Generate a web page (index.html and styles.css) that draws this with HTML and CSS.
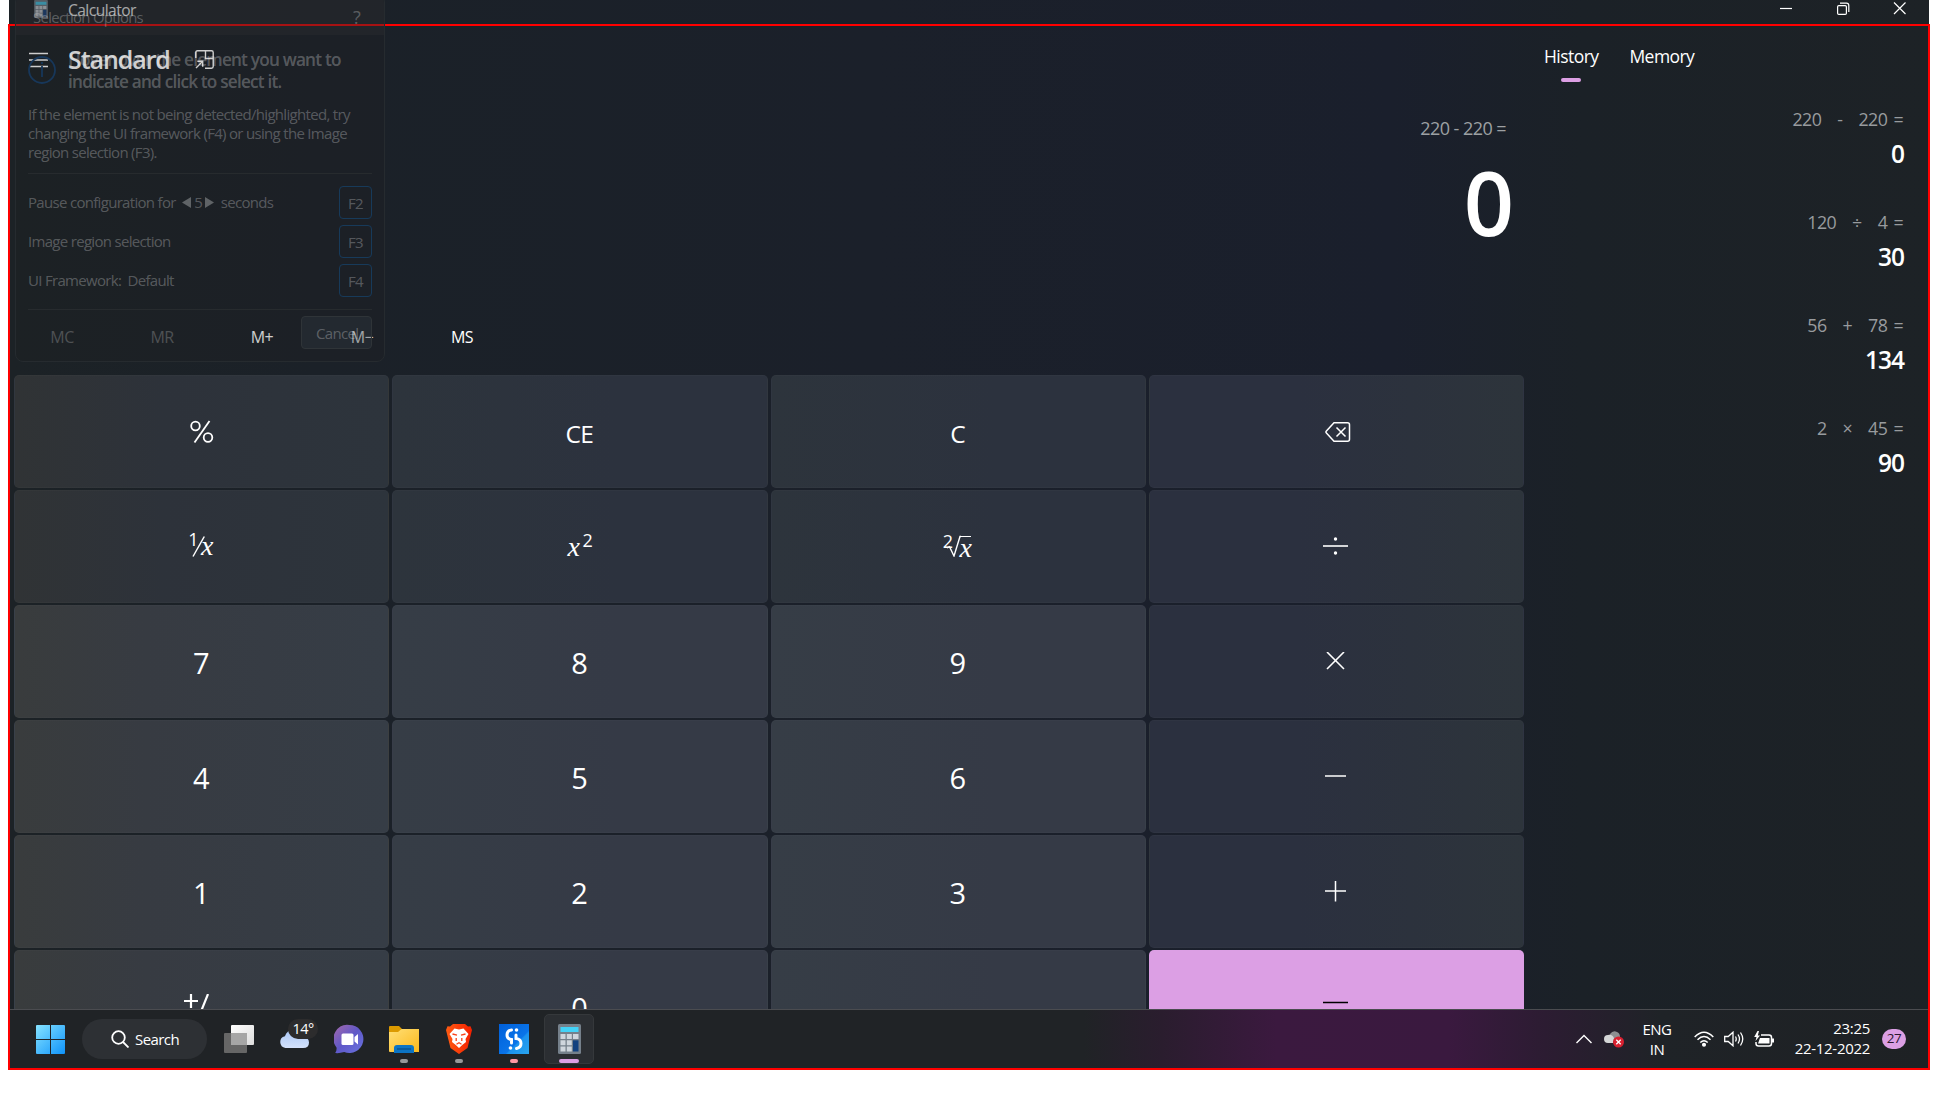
FILE: index.html
```html
<!DOCTYPE html>
<html lang="en">
<head>
<meta charset="utf-8">
<title>Calculator</title>
<link rel="stylesheet" href="styles.css">
</head>
<body>
<svg width="0" height="0" class="defs">
  <defs>
    <linearGradient id="win" x1="0" y1="0" x2="1" y2="1"><stop offset="0" stop-color="#86e3ff"/><stop offset="1" stop-color="#0f93fa"/></linearGradient>
    <linearGradient id="cloud" x1="0" y1="0" x2="0" y2="1"><stop offset="0" stop-color="#a9c6f5"/><stop offset="1" stop-color="#d4e2fb"/></linearGradient>
    <linearGradient id="chat" x1="0" y1="0" x2="1" y2="1"><stop offset="0" stop-color="#a568ab"/><stop offset=".5" stop-color="#5f58c8"/><stop offset="1" stop-color="#6a74e0"/></linearGradient>
    <linearGradient id="folder" x1="0" y1="0" x2="1" y2="1"><stop offset="0" stop-color="#ffdf76"/><stop offset="1" stop-color="#fbb91c"/></linearGradient>
    <linearGradient id="brave" x1="0" y1="0" x2="1" y2="0"><stop offset="0" stop-color="#ff5b12"/><stop offset="1" stop-color="#f42000"/></linearGradient>
    <linearGradient id="studio" x1="0" y1="0" x2="1" y2="1"><stop offset="0" stop-color="#005fd9"/><stop offset=".6" stop-color="#0a74e8"/><stop offset=".64" stop-color="#1b92ee"/><stop offset="1" stop-color="#2aa5ee"/></linearGradient>
    <linearGradient id="white" x1="0" y1="0" x2="1" y2="1"><stop offset="0" stop-color="#fff"/><stop offset="1" stop-color="#dcdcdc"/></linearGradient>
    <symbol id="calcicon" viewBox="0 0 23 30">
      <rect width="23" height="30" rx="1.5" fill="#75808b"/>
      <rect x="2.5" y="3" width="18" height="5" fill="#43d2f7"/>
      <path d="M2.5 10h5v5h-5zM8.8 10h5v5h-5zM15 10h5.500v5H15zM2.500 16.300h5v5h-5zM8.800 16.300h5v5h-5zM2.500 22.500h5v5h-5zM8.800 22.500h5v5h-5z" fill="#cfd6dd"/>
      <path d="M15 16.300h5.500v11.200H15z" fill="#12417f"/>
    </symbol>
  </defs>
</svg>
<div class="screen">
  <header class="titlebar">
    <svg class="app-icon" width="14" height="18"><use href="#calcicon" width="14" height="18"/></svg>
    <span class="app-name">Calculator</span>
    <svg class="caption" width="126" height="14" viewBox="0 0 126 14" fill="none" stroke="#fff" stroke-width="1.2">
      <path d="M0 7.500h12"/>
      <rect x="57.600" y="4.600" width="8.800" height="8.800" rx="1.200"/><path d="M60 2.200h6.500q2.300 0 2.300 2.300V11"/>
      <path d="M114 1.500l11.500 11.500M125.500 1.500L114 13"/>
    </svg>
  </header>

  <main class="calculator">
    <section class="pad">
      <div class="mode">
        <svg width="20" height="16" stroke="#fff" stroke-width="1.300"><path d="M0 1.500h19M0 8h19M0 14.500h19"/></svg>
        <h1>Standard</h1>
        <svg class="pin" width="19" height="19" viewBox="0 0 19 19" fill="none" stroke="#fff" stroke-width="1.400"><path d="M.8 8V2.500Q.8.800 2.500.8h14Q18.200.800 18.200 2.500v14q0 1.700-1.700 1.700H10M10.500.8V8.500h7.700M1 18l6.500-6.500M2.300 11.200h5.400v5.500"/></svg>
      </div>
      <div class="display">
        <div class="expression">220 - 220 =</div>
        <div class="result">0</div>
      </div>
      <div class="memory"><span class="off">MC</span><span class="off">MR</span><span>M+</span><span>M−</span><span>MS</span></div>
      <div class="keys">
        <div class="key"><svg class="pct" width="24" height="24" fill="none" stroke="#fff" stroke-width="1.800"><circle cx="5.500" cy="6" r="4.300"/><circle cx="18" cy="17.500" r="4.300"/><path d="M19.500 1L4.500 22.500"/></svg></div>
        <div class="key word">CE</div>
        <div class="key word">C</div>
        <div class="key"><svg class="back" width="26" height="20" fill="none" stroke="#fff" stroke-width="1.500"><path d="M9 .8h13.500q2 0 2 2v14.400q0 2-2 2H9L1.400 11q-.9-1 0-2zM11.500 5.500l9 9M20.500 5.500l-9 9"/></svg></div>

        <div class="key math"><span class="recip"><sup>1</sup><svg width="13" height="22" stroke="#fff" stroke-width="1.500"><path d="M1 21.500L12.300 1.500"/></svg><i>x</i></span></div>
        <div class="key math"><span><i>x</i><sup class="sq">2</sup></span></div>
        <div class="key math"><span class="root"><sup>2</sup><svg width="14" height="22" fill="none" stroke="#fff" stroke-width="1.400"><path d="M0 13l2.500-1.300L7 21 13 1.500h1"/></svg><i>x</i></span></div>
        <div class="key"><svg width="26" height="20" fill="#fff"><path d="M0 8.200h25v1.600H0z"/><circle cx="12.500" cy="2" r="1.700"/><circle cx="12.500" cy="16" r="1.700"/></svg></div>

        <div class="key num">7</div><div class="key num">8</div><div class="key num">9</div>
        <div class="key"><svg width="20" height="20" stroke="#fff" stroke-width="1.600"><path d="M1 0l17 17M18 0L1 17"/></svg></div>
        <div class="key num">4</div><div class="key num">5</div><div class="key num">6</div>
        <div class="key"><svg width="22" height="20" stroke="#fff" stroke-width="1.500"><path d="M0 9h21"/></svg></div>
        <div class="key num">1</div><div class="key num">2</div><div class="key num">3</div>
        <div class="key"><svg width="22" height="22" stroke="#fff" stroke-width="1.500"><path d="M0 10h21M10.500 0v20.500"/></svg></div>
        <div class="key num"><svg class="sign" width="36" height="26" fill="none" stroke="#fff" stroke-width="2.200"><path d="M0 7h14M7 0v14M16 20L24 0"/><path d="M20 20h14"/></svg></div>
        <div class="key num">0</div><div class="key num">.</div>
        <div class="key equals"><svg width="26" height="11" stroke="#000" stroke-width="1.500"><path d="M0 1.500h25M0 9.500h25"/></svg></div>
      </div>
    </section>

    <aside class="side">
      <nav class="tabs"><span class="active">History</span><span>Memory</span></nav>
      <div class="entry"><p><span>220</span><span>-</span><span>220 =</span></p><b>0</b></div>
      <div class="entry"><p><span>120</span><span>÷</span><span>4 =</span></p><b>30</b></div>
      <div class="entry"><p><span>56</span><span>+</span><span>78 =</span></p><b>134</b></div>
      <div class="entry"><p><span>2</span><span>×</span><span>45 =</span></p><b>90</b></div>
    </aside>
  </main>

  <footer class="taskbar">
    <div class="start"><svg width="29" height="29" fill="url(#win)"><path d="M1 0h13v14H0V1q0-1 1-1zM15 0h13q1 0 1 1v13H15zM0 15h14v14H1q-1 0-1-1zM15 15h14v13q0 1-1 1H15z"/></svg></div>
    <div class="search"><svg width="18" height="18" fill="none" stroke="#fff" stroke-width="1.800"><circle cx="7.500" cy="7.500" r="6.300"/><path d="M12 12l5.500 5.500"/></svg>Search</div>
    <div class="task"><svg width="30" height="30"><rect y="9" width="23" height="20" rx="1" fill="#666"/><rect x="7" y="1" width="23" height="20" rx="1" fill="url(#white)"/><rect x="7" y="9" width="16" height="12" fill="#a6a6a6"/></svg></div>
    <div class="task weather"><svg width="30" height="30"><path d="M6.500 24a6 6 0 0 1-.6-11.800Q8 6 14.500 6q6.500 0 8 6.500 7.500.5 7.500 6 0 5.500-6 5.500z" fill="url(#cloud)"/></svg><span class="temp">14°</span></div>
    <div class="task"><svg width="30" height="30"><path d="M15.500 1a14 14 0 1 1-5.300 27Q5 29.600 1.200 29q1.800-2.500 1.300-5.500A14 14 0 0 1 15.500 1z" fill="url(#chat)"/><rect x="7.500" y="9.500" width="12" height="11.500" rx="1.500" fill="#fff"/><path d="M20.500 13l3.500-3v10.500l-3.500-3z" fill="#fff"/></svg></div>
    <div class="task run"><svg width="30" height="30"><path d="M0 3q0-1 1-1h9l3 3-3 4H0z" fill="#dc9a00"/><path d="M0 8h9l3.500-3H30v23H1q-1 0-1-1z" fill="url(#folder)"/><path d="M5 29v-5q0-3 3-3h14q3 0 3 3v5z" fill="#0c74c4"/><path d="M8 25h14" stroke="#064a86" stroke-width="1.200"/></svg></div>
    <div class="task run"><svg width="26" height="30"><path d="M7 0h12l3 2.500 2.500-.3L26 6l-1 4-3.500 14L13 30 4.500 24 1 10 0 6l1.500-3.800L4 2.500z" fill="url(#brave)"/><path d="M8.500 4.500L13 5.500l4.500-1 5 5.500-3 5 .5 3-3.500 2.700L13 24l-3.500-3.300L6 18l.5-3-3-5z" fill="#fff"/><path d="M6.500 10l4.500 1.200M19.500 10L15 11.200M10.200 14v3M15.800 14v3M10.500 20.300l2.500-1.500 2.500 1.500" fill="none" stroke="#f8431a" stroke-width="1.300"/></svg></div>
    <div class="task run pink"><svg width="30" height="30"><rect width="30" height="30" fill="url(#studio)"/><g fill="none" stroke="#fff" stroke-width="3" stroke-linecap="round"><path d="M12.500 6Q8 6.500 8 11q0 4 4.500 4.500V19"/><path d="M17 11v3.500q5 .5 5 5 0 4-4.500 5"/></g><circle cx="17.500" cy="6" r="1.800" fill="#fff"/><circle cx="11.500" cy="24" r="1.800" fill="#fff"/></svg></div>
    <div class="task run current"><svg width="23" height="30"><use href="#calcicon" width="23" height="30"/></svg></div>
    <div class="tray">
      <svg width="16" height="10" fill="none" stroke="#fff" stroke-width="1.400"><path d="M.5 9L8 1.500 15.500 9"/></svg>
      <svg class="onedrive" width="20" height="18"><path d="M6 4q3-4 7-2 3 1 3 5l-4 4H4z" fill="#8d8f91"/><path d="M4 13q-4 0-4-4t4-4q4-1 6 3l-1 5z" fill="#d5d6d7"/><circle cx="14.500" cy="12" r="5.500" fill="#d92030"/><path d="M12.300 9.800l4.400 4.400M16.700 9.800l-4.400 4.400" stroke="#fff" stroke-width="1.300"/></svg>
      <div class="lang">ENG<br>IN</div>
      <svg class="wifi" width="20" height="16" fill="none" stroke="#fff" stroke-width="1.500"><path d="M.7 6q9.300-9.500 18.600 0M3.500 8.800q6.500-6.500 13 0M6.300 11.500q3.700-3.600 7.400 0"/><circle cx="10" cy="13.700" r="1.300" fill="#fff"/></svg>
      <svg width="20" height="16" fill="none" stroke="#fff" stroke-width="1.300"><path d="M.7 5.500h3.500L9 1.200v13.600l-4.800-4.300H.7zM11.500 5.500q1.500 2.500 0 5M14 3.500q3 4.500 0 9M16.500 1.500q4.500 6.500 0 13"/></svg>
      <svg width="20" height="16" fill="none" stroke="#fff" stroke-width="1.500"><path d="M7 4h8q2.500 0 2.500 2.500v6Q17.500 15 15 15H4.500Q2 15 2 12.500V11"/><path d="M6 7h9.500v5.500H4z" fill="#fff" stroke="none"/><path d="M3.500 0L.2 6h2.300L1.500 10 6 4.500H3.800L5 0zM18 7.500h2v4h-2z" fill="#fff" stroke="none"/></svg>
      <div class="clock">23:25<br>22-12-2022</div>
      <span class="badge">27</span>
    </div>
  </footer>
  <div class="selection"></div>

  <section class="options">
    <header><span>Selection Options</span><span class="help">?</span></header>
    <div class="body">
      <div class="lead">
        <svg width="28" height="28" fill="none" stroke="#17375a" stroke-width="1.800"><circle cx="14" cy="14" r="13"/><path d="M14 6v2M14 10v11"/></svg>
        <strong>Hover over the element you want to<br>indicate and click to select it.</strong>
      </div>
      <p>If the element is not being detected/highlighted, try<br>changing the UI framework (F4) or using the Image<br>region selection (F3).</p>
      <div class="rows">
        <div class="row"><span>Pause configuration for&nbsp; <svg width="9" height="11"><path d="M9 0v11L0 5.500z"/></svg> 5 <svg width="9" height="11"><path d="M0 0v11l9-5.500z"/></svg>&nbsp; seconds</span><kbd>F2</kbd></div>
        <div class="row"><span>Image region selection</span><kbd>F3</kbd></div>
        <div class="row"><span>UI Framework:&nbsp; Default</span><kbd>F4</kbd></div>
      </div>
      <div class="cancel">Cancel</div>
    </div>
  </section>
</div>
</body>
</html>
```
FILE: styles.css
```css
* { box-sizing: border-box; }
body {
  margin: 0;
  background: #fff;
  font-family: "Open Sans", "Noto Sans", sans-serif;
  letter-spacing: -0.035em;
  color: #fff;
  overflow: hidden;
}
.defs { position: absolute; }
svg { flex: none; display: block; }
p, h1 { margin: 0; }

.screen {
  position: relative;
  display: flex;
  flex-direction: column;
  width: 1920px;
  height: 1070px;
  margin-left: 9px;
  background: linear-gradient(90deg, #1c2226 0, #1b2128 16%, #1b202a 45%, #1a1f2c 72%, #1b2127 82%, #1d2226 100%);
}

/* Title bar */
.titlebar {
  display: flex;
  flex: none;
  align-items: flex-start;
  height: 24px;
  padding: 0 23px 0 25px;
}
.app-name { margin: 0 0 0 20px; font-size: 15.600px; line-height: 20px; }
.caption { margin: 1px 0 0 auto; }

/* Calculator */
.calculator { display: flex; flex: none; height: 985px; overflow: hidden; }
.pad { display: flex; flex-direction: column; width: 1516px; padding-left: 5px; }
.mode { display: flex; flex: none; align-items: center; height: 71px; padding-left: 15px; }
.mode h1 { margin: -1px 0 0 19px; width: 127px; font-size: 25px; font-weight: 600; line-height: 32px; letter-spacing: -0.043em; }
.display { flex: none; height: 191px; padding: 18px 11px 0 0; text-align: right; }
.expression { padding-right: 8px; font-size: 18px; line-height: 30px; color: #9da0a3; }
.result { margin-top: 9px; font-size: 88px; font-weight: 600; line-height: 100px; letter-spacing: 0; }
.memory { display: grid; flex: none; grid-template-columns: repeat(5, 100px); height: 89px; padding: 38px 0 0; font-size: 16px; line-height: 26px; text-align: center; margin-left: -2px; }
.off { color: #5b5f62; }
.keys {
  display: grid;
  flex: none;
  width: 1510px;
  grid-template-columns: repeat(4, 1fr);
  grid-auto-rows: 113px;
  gap: 2px 3px;
}
.key {
  display: flex;
  align-items: center;
  justify-content: center;
  border-radius: 5px;
  border: 1px solid rgba(255, 255, 255, .020);
  background: linear-gradient(90deg, #2d343c, #2c323e 60%);
  font-size: 25px;
}
.key:nth-child(4n) { background: linear-gradient(90deg, #2b303f 40%, #2d343b); }
.key:nth-child(4n + 1) { background: linear-gradient(90deg, #303335, #2d323a 40%, #2d343c); }
.key.num { background: linear-gradient(90deg, #363d46, #353a46 60%); font-size: 29px; padding: 1px 1px 0 0; }
.key.num:nth-child(4n + 1) { background: linear-gradient(90deg, #393c3d, #373b42 35%, #363d46); }
.key.word { font-size: 24.500px; padding: 3px 1px 0 0; }
.key.equals { background: #dc9fe4; border: 0; }
.sign { margin-right: -2px; }
.back { margin: 0 0 0 3px; }
.math { padding-bottom: 1px; }
.math i { font: italic 28px/28px "Liberation Serif", serif; }
.math sup { font-size: 18px; line-height: 0; vertical-align: 9px; }
.math .sq { margin-left: 3px; }
.recip, .root { display: flex; align-items: center; margin-right: 2px; }
.recip sup { align-self: flex-start; line-height: 14px; margin-right: -6px; }
.recip i { margin-left: -4px; }
.root sup { align-self: flex-start; line-height: 12px; margin-right: -6px; }
.root i { margin-left: -1px; border-top: 1.500px solid #fff; line-height: 21px; height: 21px; }

/* History */
.side { flex: 1; padding: 17px 25px 0 0; }
.tabs { display: flex; gap: 31px; height: 60px; padding-left: 19px; font-size: 17.500px; line-height: 30px; }
.tabs .active::after {
  content: "";
  display: block;
  width: 20px;
  height: 4px;
  margin: 7px auto 0;
  border-radius: 2px;
  background: #dc9fe4;
}
.entry { height: 103px; padding-top: 3px; text-align: right; }
.entry p { display: flex; justify-content: flex-end; gap: 16px; font-size: 17.800px; line-height: 30px; padding-right: 1px; color: #989b9e; word-spacing: 2px; }
.entry b { display: block; margin-top: 3px; font-size: 24.500px; font-weight: 600; line-height: 34px; letter-spacing: -0.040em; }

/* Taskbar */
.taskbar {
  display: flex;
  flex: none;
  align-items: center;
  height: 61px;
  padding-bottom: 2px;
  border-top: 1px solid #4b4c50;
  background: linear-gradient(90deg, #202326 0 56%, #2a1d2e 60%, #3b193f 66%, #3a193f 75%, #2c1c32 80%, #1f2327 86%, #1e2124);
}
.start { padding-left: 27px; width: 73px; }
.search {
  display: flex;
  align-items: center;
  width: 125px;
  height: 40px;
  margin-right: 4px;
  padding-left: 29px;
  border-radius: 20px;
  background: #2d3034;
  font-size: 15px;
  gap: 6px;
}
.task { position: relative; display: flex; align-items: center; justify-content: center; width: 55px; height: 50px; }
.run::after { content: ""; position: absolute; left: 24px; bottom: 1px; width: 8px; height: 4px; border-radius: 2px; background: #96989a; }
.pink::after { background: #ff98a4; }
.current { width: 50px; margin-left: 3px; border-radius: 5px; background: #2b2e32; border: 1px solid #35383b; }
.current::after { left: 14px; bottom: 0; width: 20px; background: #dc9fe4; }
.temp { position: absolute; left: 22px; top: 5px; width: 30px; height: 20px; border-radius: 10px; background: #2c2c2d; font-size: 14.500px; line-height: 20px; text-align: center; }
.tray { display: flex; align-items: center; margin-left: auto; padding-right: 23px; font-size: 15px; line-height: 20px; }
.onedrive { margin-left: 12px; }
.lang { width: 42px; margin: 0 16px 0 12px; text-align: center; }
.wifi + svg, .wifi + svg + svg { margin-left: 10px; }
.clock { width: 96px; margin-top: -2px; text-align: right; letter-spacing: -0.020em; }
.badge { width: 24px; height: 20px; margin-left: 12px; border-radius: 10px; background: #dc9fe4; color: #2c1730; font-size: 13.500px; line-height: 19px; text-align: center; }

/* Element highlight drawn on top of the desktop */
.selection { position: absolute; left: -1px; top: 24px; width: 1922px; height: 1046px; border: 2px solid #f00; }

/* Fading selection panel floating over the calculator */
.options {
  position: absolute;
  left: 6px;
  top: -6px;
  width: 370px;
  height: 368px;
  border: 1px solid #262b2f;
  border-radius: 8px;
  background: rgba(34, 34, 34, .220);
  color: rgba(255, 255, 255, .270);
  font-size: 15px;
  line-height: 19px;
  letter-spacing: -0.046em;
}
.options header { display: flex; justify-content: space-between; height: 40px; padding: 13px 24px 0 17px; background: rgba(50, 52, 54, .250); border-radius: 8px 8px 0 0; font-size: 14.900px; }
.options .help { font-size: 18px; }
.options .body { padding: 14px 12px 0; }
.lead { display: flex; gap: 12px; }
.lead svg { margin-top: 7px; }
.lead strong { font-size: 17.200px; font-weight: 600; line-height: 22px; letter-spacing: -0.046em; }
.options p { margin: 12px 0 0; }
.rows { margin-top: 11px; padding: 9px 0; border-top: 1px solid #272b2e; border-bottom: 1px solid #272b2e; }
.row { display: flex; align-items: center; justify-content: space-between; height: 39px; }
.row svg { display: inline-block; fill: #5f6366; vertical-align: 0; }
.row kbd { width: 33px; height: 33px; border: 1px solid #173a5a; border-radius: 4px; font-family: inherit; line-height: 32px; text-align: center; }
.cancel { width: 71px; height: 33px; margin: 6px 0 0 auto; border: 1px solid #2f3438; border-radius: 4px; background: rgba(54, 62, 74, .300); line-height: 33px; padding-left: 14px; }
```
